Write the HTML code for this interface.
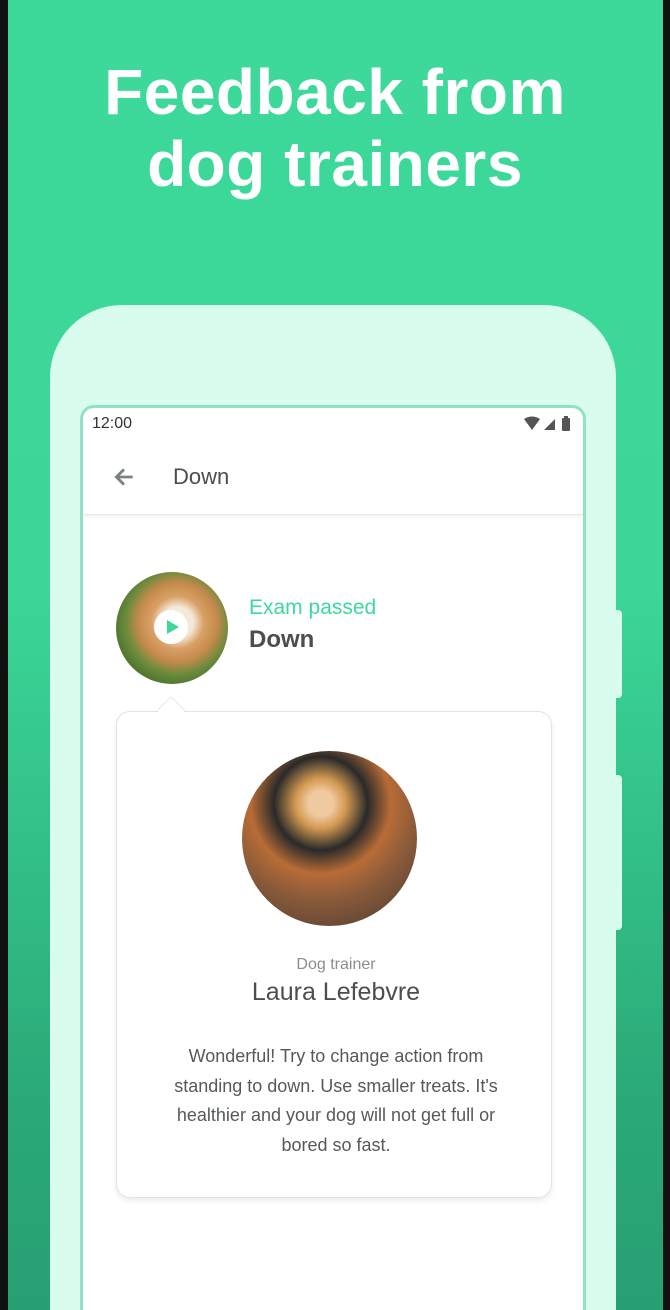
<!DOCTYPE html>
<html><head><meta charset="utf-8"><style>
*{margin:0;padding:0;box-sizing:border-box}
html,body{width:670px;height:1310px;overflow:hidden}
body{background:#111;font-family:"Liberation Sans",sans-serif;position:relative}
.bg{position:absolute;left:8px;top:0;width:655px;height:1310px;background:linear-gradient(#3dd99b 0%,#3bd698 45%,#2aa877 85%,#27a073 100%)}
h1{position:absolute;left:0;width:670px;top:56px;text-align:center;color:#fff;font:bold 64px/72px "Liberation Sans",sans-serif;letter-spacing:0.5px}
.phone{position:absolute;left:50px;top:305px;width:566px;height:1005px;background:#d8fdee;border-radius:72px 72px 0 0}
.btn{position:absolute;left:614px;width:8px;background:#d8fdee;border-radius:0 4px 4px 0}
.screen{position:absolute;left:80px;top:405px;width:506px;height:960px;background:#fff;border:3px solid #8fe3c0;border-radius:14px;overflow:hidden}
.status{position:absolute;left:9px;top:7px;font-size:16px;color:#333}
.bar{position:absolute;left:0;top:0;width:100%;height:107px;border-bottom:1px solid #e8e8e8;box-shadow:0 2px 4px rgba(0,0,0,.06)}
.title{position:absolute;left:90px;top:56px;font-size:22px;color:#4a4f4d}
.av{position:absolute;left:33px;top:164px;width:112px;height:112px;border-radius:50%;background:radial-gradient(circle at 55% 45%,#f4e8d8 0 18%,#d9a066 30%,#c58a4c 45%,#6a8a3c 60%,#3f6a2a 80%)}
.play{position:absolute;left:38px;top:38px;width:34px;height:34px;border-radius:50%;background:#fff}
.play:after{content:"";position:absolute;left:13px;top:10px;border-left:12px solid #3dd99b;border-top:7px solid transparent;border-bottom:7px solid transparent}
.ep{position:absolute;left:166px;top:188px;font-size:21px;color:#3dd99b}
.dn{position:absolute;left:166px;top:218px;font-size:24px;font-weight:bold;color:#4a4f4d}
.card{position:absolute;left:33px;top:303px;width:436px;height:487px;border:1px solid #e3e3e3;border-radius:14px;box-shadow:0 3px 6px rgba(0,0,0,.08);background:#fff}
.tip{position:absolute;left:78px;top:292px;width:20px;height:20px;background:#fff;border-left:1px solid #e3e3e3;border-top:1px solid #e3e3e3;transform:rotate(45deg);border-radius:3px 0 0 0}
.tr{position:absolute;left:159px;top:343px;width:175px;height:175px;border-radius:50%;background:radial-gradient(circle at 45% 30%,#f0c9a0 0 8%,#d49a52 16%,#2a2a2a 30%,#b86c36 45%,#8a5a3a 62%,#6a4a36 80%)}
.role{position:absolute;left:0;width:506px;top:548px;text-align:center;font-size:16px;color:#8a8f8d}
.name{position:absolute;left:0;width:506px;top:570px;text-align:center;font-size:25px;color:#4a4f4d}
.msg{position:absolute;left:0;width:506px;top:634px;text-align:center;font-size:18px;line-height:29.5px;color:#555a58;white-space:nowrap}
</style></head><body>
<div class="bg"></div>
<h1>Feedback from<br>dog trainers</h1>
<div class="phone"></div>
<div class="btn" style="top:610px;height:88px"></div>
<div class="btn" style="top:775px;height:155px"></div>
<div class="screen">
 <div class="bar"></div>
 <div class="status">12:00</div>
 <svg style="position:absolute;right:7px;top:8px" width="52" height="16" viewBox="0 0 52 16"><path d="M0 3 Q8 -2 16 3 L8 14 Z" fill="#555"/><path d="M20 14 L31 3 L31 14 Z" fill="#555"/><rect x="38" y="2" width="8" height="13" rx="1" fill="#555"/><rect x="40" y="0" width="4" height="3" fill="#555"/></svg>
 <svg style="position:absolute;left:28px;top:56px" width="26" height="26" viewBox="0 0 24 24"><path d="M20 12H5M12 5l-7 7 7 7" stroke="#7a817e" stroke-width="2.6" fill="none"/></svg>
 <div class="title">Down</div>
 <div class="av"><div class="play"></div></div>
 <div class="ep">Exam passed</div>
 <div class="dn">Down</div>
 <div class="card"></div>
 <div class="tip"></div>
 <div class="tr"></div>
 <div class="role">Dog trainer</div>
 <div class="name">Laura Lefebvre</div>
 <div class="msg">Wonderful! Try to change action from<br>standing to down. Use smaller treats. It's<br>healthier and your dog will not get full or<br>bored so fast.</div>
</div>
</body></html>
